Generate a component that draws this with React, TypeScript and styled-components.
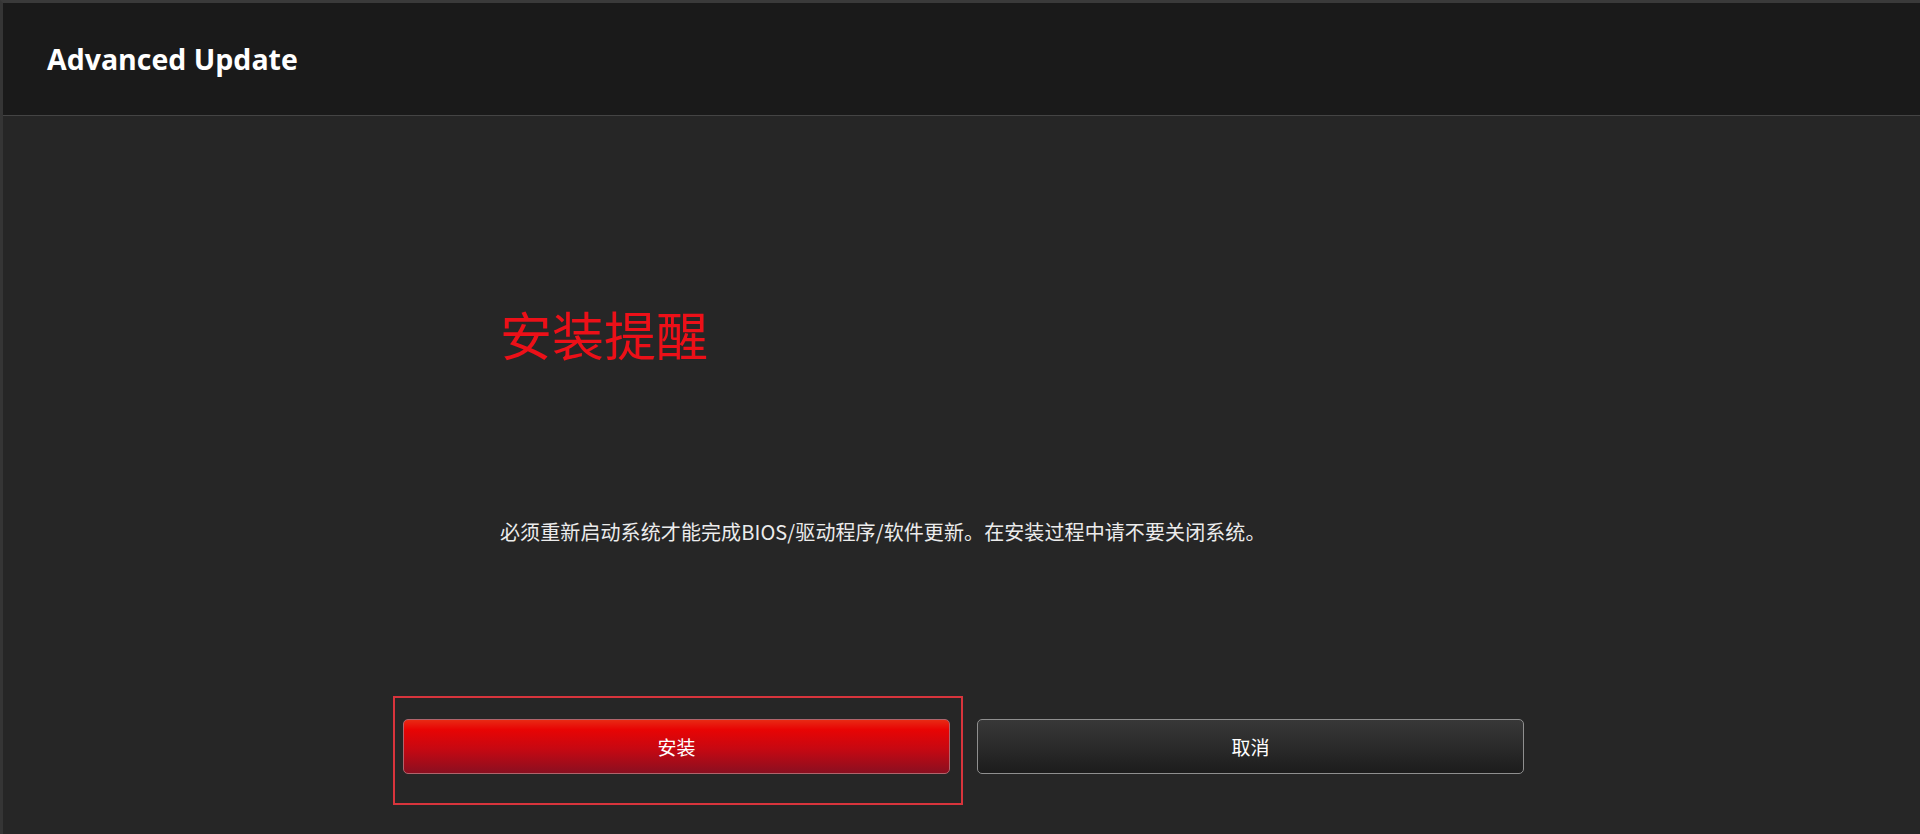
import React from "react"
import styled, { createGlobalStyle } from "styled-components"

const GlobalStyle = createGlobalStyle`
  html, body {
    margin: 0;
    padding: 0;
    background: #262626;
  }
  body {
    font-family: "Noto Sans", "Noto Sans CJK SC", sans-serif;
  }
`

const Page = styled.div`
  width: 1920px;
  height: 834px;
  box-sizing: border-box;
  border-left: 3px solid #353535;
  border-top: 3px solid #3a3a3a;
  background: #262626;
  display: flex;
  flex-direction: column;
  overflow: hidden;
`

const Header = styled.header`
  height: 113px;
  flex: none;
  box-sizing: border-box;
  background: #1a1a1a;
  border-bottom: 1px solid #444444;
  display: flex;
  align-items: center;
  padding-left: 44px;
`

const Title = styled.h1`
  margin: 0;
  font-family: "Open Sans", "Noto Sans", sans-serif;
  font-weight: 700;
  font-size: 28.5px;
  color: #ffffff;
  letter-spacing: 0;
`

const Main = styled.main`
  flex: 1;
  display: flex;
  flex-direction: column;
`

const Content = styled.div`
  padding-left: 497px;
`

const Heading = styled.h2`
  margin: 192px 0 0;
  font-family: "Noto Sans CJK SC", sans-serif;
  font-weight: 400;
  font-size: 52px;
  line-height: 52px;
  color: #ec1018;
`

const Message = styled.p`
  margin: 162px 0 0;
  font-family: "Noto Sans CJK SC", sans-serif;
  font-size: 20px;
  line-height: 20px;
  color: #ececec;
  letter-spacing: 0.1px;
`

const Actions = styled.div`
  margin-top: 154px;
  display: flex;
  align-items: flex-start;
  padding-left: 390px;
  gap: 14px;
`

const FocusRing = styled.div`
  border: 2px solid #d8343c;
  padding: 21px 11px 29px 8px;
`

const Button = styled.button<{ $primary?: boolean }>`
  width: 547px;
  height: 55px;
  box-sizing: border-box;
  border-radius: 5px;
  border: 1.5px solid ${p => (p.$primary ? "#b0646c" : "#8f8f8f")};
  background: ${p =>
    p.$primary
      ? "linear-gradient(to bottom, #e82a14 0%, #e80404 18%, #c60812 55%, #8a0f20 100%)"
      : "linear-gradient(to bottom, #383838 0%, #2c2c2c 45%, #1c1c1c 100%)"};
  color: #ffffff;
  font-family: "Noto Sans CJK SC", sans-serif;
  font-size: 19px;
  cursor: pointer;
  padding: 0;
`

const PlainSlot = styled.div`
  padding-top: 23px;
`

export default function App() {
  return (
    <>
      <GlobalStyle />
      <Page>
        <Header>
          <Title>Advanced Update</Title>
        </Header>
        <Main>
          <Content>
            <Heading>安装提醒</Heading>
            <Message>必须重新启动系统才能完成BIOS/驱动程序/软件更新。在安装过程中请不要关闭系统。</Message>
          </Content>
          <Actions>
            <FocusRing>
              <Button $primary>安装</Button>
            </FocusRing>
            <PlainSlot>
              <Button>取消</Button>
            </PlainSlot>
          </Actions>
        </Main>
      </Page>
    </>
  )
}
